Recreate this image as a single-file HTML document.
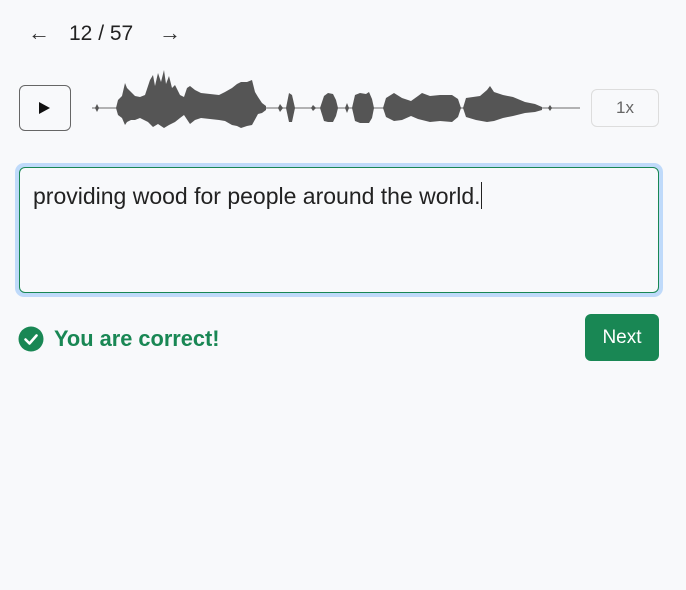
<!DOCTYPE html>
<html><head><meta charset="utf-8"><style>
body{margin:0;width:686px;height:590px;background:#f8f9fb;font-family:"Liberation Sans",sans-serif;position:relative;overflow:hidden;color:#222}
.abs{position:absolute}
</style></head><body>
<div class="abs" style="left:28px;top:20px;font-size:22px;color:#333">&#8592;</div>
<div class="abs" style="left:69px;top:22px;font-size:21px;color:#222">12 / 57</div>
<div class="abs" style="left:159px;top:20px;font-size:22px;color:#333">&#8594;</div>
<div class="abs" style="left:19px;top:85px;width:52px;height:46px;border:1px solid #666;border-radius:6px;box-sizing:border-box"></div>
<svg class="abs" style="left:0;top:0" width="686" height="150">
<polygon points="39,102 39,114 50,108" fill="#111"/>
<line x1="92" y1="108" x2="580" y2="108" stroke="#888" stroke-width="1.2"/>
<polygon fill="#555" points="
116,108 118,100 122,96 125,83 127,88 131,92 135,96 140,97 145,95 150,80 153,75 155,86 158,73 161,82 164,70 166,84 169,76 172,88 175,85 180,95 184,97 187,88 190,86 195,90 201,93 210,94 219,95 225,92 232,88 237,84 241,82 247,82 252,80 255,92 258,97 262,103 266,106
266,110 262,113 258,114 252,125 247,126 241,128 237,126 232,125 225,121 219,120 210,119 201,118 195,120 190,124 184,115 180,118 175,122 169,125 164,128 158,124 153,127 148,122 140,118 135,120 131,120 127,122 125,125 122,118 118,115 116,108"/>
<polygon fill="#555" points="286,108 289,93 292,95 295,108 292,122 289,122"/>
<polygon fill="#555" points="320,108 324,96 328,93 333,94 336,100 338,108 336,116 333,122 328,122 324,121"/>
<polygon fill="#555" points="352,108 355,95 360,93 366,94 369,92 372,99 374,108 372,118 369,123 360,123 355,121"/>
<polygon fill="#555" points="383,108 386,98 394,93 402,98 411,101 418,96 422,93 430,96 440,95 452,95 458,99 461,108 458,117 452,122 440,121 430,122 418,119 411,116 402,120 394,121 386,117"/>
<polygon fill="#555" points="463,108 466,98 480,96 487,90 490,86 494,92 503,95 513,97 525,102 535,104 542,107 542,110 535,112 525,113 513,116 503,118 494,121 487,122 476,120 466,117"/>
<polygon fill="#555" points="95,108 97,104 99,108 97,112"/>
<polygon fill="#555" points="548,108 550,105 552,108 550,111"/>
<polygon fill="#555" points="311,108 313,105 316,108 313,111"/>
<polygon fill="#555" points="345,108 347,103 349,108 347,113"/>
<polygon fill="#555" points="278,108 280,104 283,108 280,112"/>
</svg>
<div class="abs" style="left:591px;top:89px;width:68px;height:38px;border:1px solid #ddd;border-radius:6px;box-sizing:border-box;color:#666;font-size:17px;text-align:center;line-height:36px">1x</div>
<div class="abs" style="left:15px;top:163px;width:648px;height:134px;border-radius:9px;background:#bfdafa"></div>
<div class="abs" style="left:19px;top:167px;width:640px;height:126px;border:1px solid #198754;border-radius:6px;box-sizing:border-box;background:#f8f9fb"></div>
<div class="abs" style="left:33px;top:182px;font-size:23px;color:#222;white-space:nowrap">providing wood for people around the world.<span style="display:inline-block;width:1px;height:27px;background:#222;vertical-align:-5px"></span></div>
<svg class="abs" style="left:18px;top:326px" width="26" height="26"><circle cx="13" cy="13" r="12.5" fill="#198754"/><path d="M7.5 13.5 L11.5 17.5 L18.5 9.5" stroke="#fff" stroke-width="2.6" fill="none" stroke-linecap="round" stroke-linejoin="round"/></svg>
<div class="abs" style="left:54px;top:326px;font-size:21.8px;font-weight:bold;color:#198754">You are correct!</div>
<div class="abs" style="left:585px;top:314px;width:74px;height:47px;background:#198754;border-radius:6px;color:#fff;font-size:19px;text-align:center;line-height:47px">Next</div>
</body></html>
